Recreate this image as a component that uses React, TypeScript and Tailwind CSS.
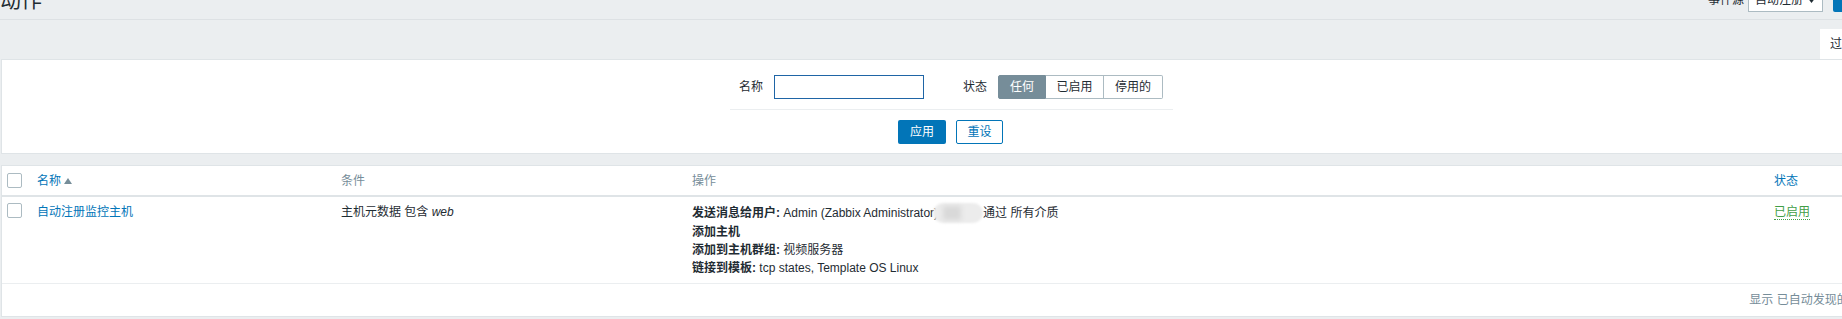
import React from "react";

const font = { fontFamily: '"Liberation Sans", Arial, "Noto Sans CJK SC", sans-serif' };

function Checkbox() {
  return <span className="block w-[15px] h-[15px] border border-[#acbbc2] rounded-[2px] bg-white" />;
}

export default function App() {
  return (
    <div className="w-[1842px] h-[319px] overflow-hidden bg-[#ebeef0] text-[12px] text-[#1f2c33]" style={font}>
      <div className="w-[1903px] -mt-[20px]">
        {/* header */}
        <div className="h-[40px] flex items-center justify-between border-b border-[#dde1e4]">
          <h1 className="text-[21px] leading-none font-normal">动作</h1>
          <div className="flex items-center">
            <span className="leading-none">事件源</span>
            <div className="ml-[4px] w-[75px] h-[24px] border border-[#acbbc2] bg-white flex items-center justify-between pl-[6px] pr-[6px]">
              <span>自动注册</span>
              <svg width="9" height="6" viewBox="0 0 9 6"><path d="M0 0h9L4.5 6z" fill="#1f2c33" /></svg>
            </div>
            <button className="ml-[10px] h-[24px] bg-[#0275b8] text-white px-[11px] rounded-[2px]">创建动作</button>
          </div>
        </div>
        {/* tab band */}
        <div className="h-[39px] flex justify-end items-end">
          <div className="w-[83px] h-[30px] bg-white flex items-center pl-[10px]">
            <span>过滤器</span>
          </div>
        </div>
        {/* filter panel */}
        <div className="mx-px bg-white border border-[#dfe4e7] pt-[15px] pb-[9px]">
          <div className="w-[443px] mx-auto">
            <div className="h-[24px] flex items-center">
              <span className="ml-[9px]">名称</span>
              <div className="ml-[11px] w-[150px] h-[24px] border border-[#1f65a6] bg-white" />
              <span className="ml-[39px]">状态</span>
              <div className="ml-[11px] flex h-[24px]">
                <span className="w-[48px] h-[24px] bg-[#768d99] border border-[#768d99] text-white flex items-center justify-center rounded-l-[2px]">任何</span>
                <span className="w-[58px] h-[24px] border border-[#acbbc2] border-l-0 flex items-center justify-center">已启用</span>
                <span className="w-[59px] h-[24px] border border-[#acbbc2] border-l-0 flex items-center justify-center rounded-r-[2px]">停用的</span>
              </div>
            </div>
            <div className="mt-[10px] border-t border-[#ebeef0]" />
            <div className="mt-[10px] flex justify-center gap-[10px] pr-[2px]">
              <button className="w-[48px] h-[24px] bg-[#0275b8] text-white rounded-[2px]">应用</button>
              <button className="w-[47px] h-[24px] border border-[#0275b8] text-[#0275b8] bg-white rounded-[2px]">重设</button>
            </div>
          </div>
        </div>
        {/* table */}
        <div className="mx-px mt-[11px] bg-white border border-[#dfe4e7]">
          <div className="grid grid-cols-[30px_304px_351px_1082px_1fr] h-[31px] items-center border-b-2 border-[#dfe4e7]">
            <div className="pl-[5px]"><Checkbox /></div>
            <div className="pl-[5px] text-[#0275b8] flex items-center">
              名称
              <svg className="ml-[3px]" width="8" height="6" viewBox="0 0 8 6"><path d="M0 6L4 0l4 6z" fill="#768d99" /></svg>
            </div>
            <div className="pl-[5px] text-[#768d99]">条件</div>
            <div className="pl-[5px] text-[#768d99]">操作</div>
            <div className="pl-[5px] text-[#0275b8]">状态</div>
          </div>
          <div className="grid grid-cols-[30px_304px_351px_1082px_1fr] pt-[6px] pb-[6px] border-b border-[#ebeef0] leading-[18px] items-start">
            <div className="pl-[5px]"><Checkbox /></div>
            <div className="pl-[5px] text-[#0275b8]">自动注册监控主机</div>
            <div className="pl-[5px]">主机元数据 包含 <i>web</i></div>
            <div className="pl-[5px]">
              <div className="flex items-center">
                <b>发送消息给用户:</b>&nbsp;Admin (Zabbix Administrator)
                <span className="-ml-[5px] inline-block w-[50px] h-[20px] rounded-[10px] bg-[#ececec] blur-[1px] relative">
                  <span className="absolute left-[10px] top-[3px] w-[18px] h-[14px] bg-[#d9d9d9] blur-[2px]" />
                </span>
                通过 所有介质
              </div>
              <div><b>添加主机</b></div>
              <div><b>添加到主机群组:</b> 视频服务器</div>
              <div><b>链接到模板:</b> tcp states, Template OS Linux</div>
            </div>
            <div className="pl-[5px]">
              <span className="text-[#429e47] border-b border-dotted border-[#429e47]">已启用</span>
            </div>
          </div>
          <div className="h-[32px] flex items-center justify-end pr-[5px] text-[#768d99]">
            显示 已自动发现的 1 中的 1
          </div>
        </div>
      </div>
    </div>
  );
}
